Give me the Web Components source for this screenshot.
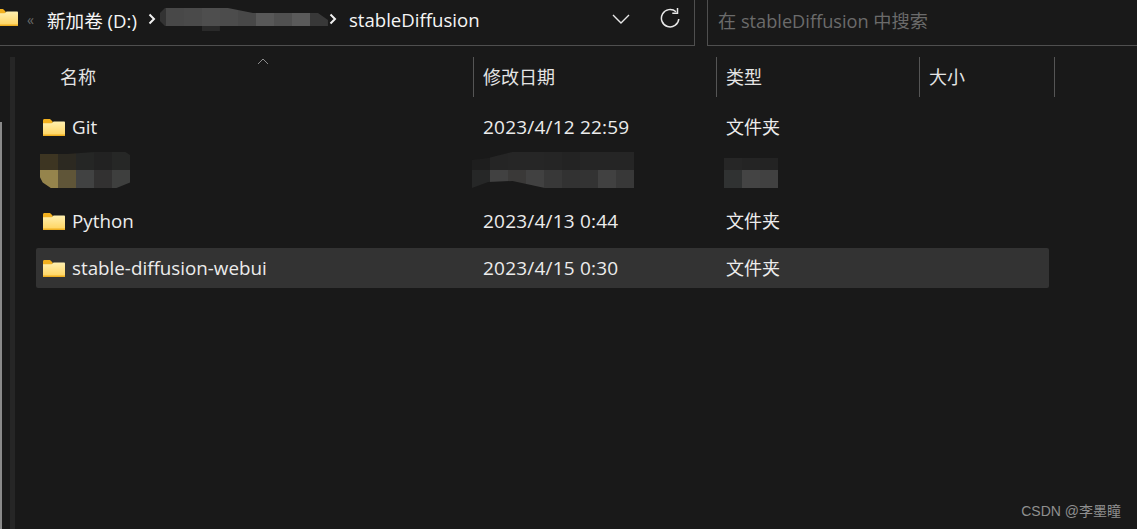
<!DOCTYPE html>
<html lang="zh">
<head>
<meta charset="utf-8">
<title>stableDiffusion</title>
<style>
  html, body { margin: 0; height: 100%; background: #191919; overflow: hidden; }
  body { font-family: "Open Sans", "Noto Sans CJK SC", sans-serif; color: #e6e6e6; }
</style>
</head>
<body>
<explorer-window>
  <address-bar slot="top"></address-bar>
  <file-list slot="main">
    <file-row name="Git" date="2023/4/12 22:59" kind="文件夹"></file-row>
    <file-row blurred></file-row>
    <file-row name="Python" date="2023/4/13 0:44" kind="文件夹"></file-row>
    <file-row name="stable-diffusion-webui" date="2023/4/15 0:30" kind="文件夹" selected></file-row>
  </file-list>
</explorer-window>

<script>
const FOLDER = `<svg width="24" height="20" viewBox="0 0 24 20">
  <defs><linearGradient id="fg" x1="0" y1="0" x2="0" y2="1">
    <stop offset="0" stop-color="#fff0b0"/><stop offset="1" stop-color="#ffd35c"/>
  </linearGradient></defs>
  <path d="M1 3.500C1 2.700 1.600 2 2.400 2H8l2.600 2.600V7H1z" fill="#f2b01e"/>
  <path d="M1 6.200h8.600L11.600 4.400H22c.6 0 1 .5 1 1V18c0 .6-.4 1-1 1H2c-.6 0-1-.4-1-1z" fill="url(#fg)"/>
  <path d="M1 17.600h22V18c0 .6-.4 1-1 1H2c-.6 0-1-.4-1-1z" fill="#efaf22"/>
</svg>`;

// pixelated smear that hides part of the screenshot
class MosaicPatch extends HTMLElement {
  connectedCallback() {
    const rows = this.getAttribute("cells").split("|").map((r) => r.split(","));
    const size = this.getAttribute("size") || 18;
    const root = this.attachShadow({ mode: "open" });
    root.innerHTML = `<style>
      :host { display: inline-grid; grid-auto-rows: ${size}px; grid-template-columns: repeat(${rows[0].length}, ${size}px); }
      i { display: block; }
    </style>` + rows.map((r) => r.map((c) => `<i style="background:#${c}"></i>`).join("")).join("");
    this.style.clipPath = this.getAttribute("clip") || "none";
  }
}
customElements.define("mosaic-patch", MosaicPatch);

const addressTpl = document.createElement("template");
addressTpl.innerHTML = `
<style>
  :host { display: grid; grid-template-columns: 695px 1fr; column-gap: 12px; height: 46px; }
  .crumbs {
    display: flex; align-items: center;
    border-right: 1px solid #4f4f4f; border-bottom: 1px solid #4f4f4f; box-sizing: border-box;
    height: 46px; padding-bottom: 7px; font-size: 18.600px; color: #f5f5f5; overflow: hidden;
  }
  .crumbs svg { flex: none; }
  .home { margin-left: -5px; margin-right: 8px; }
  .more { color: #6a6a6a; font-size: 14px; width: 20px; }
  .sep { margin: 0 -8px 0 11px; }
  .sep2 { margin: 0 12px 0 1px; }
  .drive { white-space: nowrap; }
  mosaic-patch { align-self: flex-start; margin-top: 8px; }
  .path { white-space: nowrap; }
  .tools { margin-left: auto; display: flex; align-items: center; }
  .drop { margin-right: 30px; }
  .refresh { margin-right: 14px; }
  .search {
    border-left: 1px solid #4f4f4f; border-bottom: 1px solid #4f4f4f; box-sizing: border-box; height: 46px;
    padding: 0 0 5px 10px; display: flex; align-items: center;
    font-size: 18.200px; color: #6b6b6b; white-space: nowrap;
  }
</style>
<div class="crumbs">
  <span class="home">${FOLDER}</span>
  <span class="more">«</span>
  <span class="drive">新加卷 (D:)</span>
  <svg class="sep" width="8" height="12" viewBox="0 0 8 12"><path d="M1.500 1.500 6 6l-4.500 4.500" fill="none" stroke="#f0f0f0" stroke-width="2"/></svg>
  <mosaic-patch cells="333333,484848,4a4a4a,4e4e4e,4c4c4c,484848,585858,505050,5a5a5a,383838|191919,191919,191919,2a2a2a,191919,191919,191919,191919,191919,191919" clip="polygon(12px 5px,17px 0,80px 0,105px 5px,170px 5px,180px 12px,180px 18px,72px 18px,72px 23px,54px 23px,54px 18px,17px 18px,12px 13px)"></mosaic-patch>
  <svg class="sep2" width="8" height="12" viewBox="0 0 8 12"><path d="M1.500 1.500 6 6l-4.500 4.500" fill="none" stroke="#f0f0f0" stroke-width="2"/></svg>
  <span class="path">stableDiffusion</span>
  <span class="tools">
    <svg class="drop" width="18" height="10" viewBox="0 0 18 10"><path d="M1 1l8 8 8-8" fill="none" stroke="#e8e8e8" stroke-width="1.400"/></svg>
    <svg class="refresh" width="20" height="22" viewBox="0 0 20 22"><path d="M16 3.800A8.700 8.700 0 1 0 18.800 11" fill="none" stroke="#e8e8e8" stroke-width="1.500"/><path d="M17.500 0v5.200h-5.200" fill="none" stroke="#e8e8e8" stroke-width="1.500"/></svg>
  </span>
</div>
<div class="search">在 stableDiffusion 中搜索</div>`;

class AddressBar extends HTMLElement {
  constructor() {
    super();
    this.attachShadow({ mode: "open" });
    this.shadowRoot.append(addressTpl.content.cloneNode(true));
  }
}
customElements.define("address-bar", AddressBar);

const rowTpl = document.createElement("template");
rowTpl.innerHTML = `
<style>
  :host {
    display: grid; grid-template-columns: 447px 243px 1fr; align-items: center;
    height: 40px; width: 1013px; box-sizing: border-box; font-size: 19px; color: #ececec;
    border-radius: 2px;
  }
  :host([selected]) { background: #333333; }
  .name { display: flex; align-items: center; padding-left: 6px; white-space: nowrap; font-size: 18.800px; }
  .name svg { display: block; margin-right: 6px; }
  .date { display: flex; white-space: nowrap; letter-spacing: .2px; }
  .kind { display: flex; font-size: 18px; margin-top: -2px; }
</style>
<div class="name"></div><div class="date"></div><div class="kind"></div>`;

class FileRow extends HTMLElement {
  constructor() {
    super();
    this.attachShadow({ mode: "open" });
    this.shadowRoot.append(rowTpl.content.cloneNode(true));
  }

  connectedCallback() {
    const [name, date, kind] = this.shadowRoot.querySelectorAll("div");
    if (this.hasAttribute("blurred")) {
      name.style.paddingLeft = "4px";
      name.innerHTML = `<mosaic-patch style="margin-top:-8px" cells="3d3522,2c2921,252625,222222,262726|95844c,5f5538,414242,323131,3e3f3e" clip="polygon(0 2px,30% 2px,60% 0,95% 0,100% 3px,100% 85%,85% 100%,12% 100%,3% 85%,0 70%)"></mosaic-patch>`;
      date.style.marginLeft = "-11px";
      date.innerHTML = `<mosaic-patch style="margin-top:-8px" cells="1e1e1e,252525,262626,262626,252525,232323,252525,252525,252525|262727,414141,3a3938,414141,383838,323232,333333,414141,383838" clip="polygon(0 8px,10% 6px,25% 0,100% 0,100% 100%,45% 100%,25% 29px,10% 30px,0 36px)"></mosaic-patch>`;
      kind.style.marginLeft = "-2px";
      kind.innerHTML = `<mosaic-patch style="margin-top:-6px" cells="262626,242424,232323|303232,444444,414141" clip="polygon(0 6px,100% 6px,100% 100%,0 100%)"></mosaic-patch>`;
      return;
    }
    name.innerHTML = FOLDER;
    name.append(this.getAttribute("name"));
    date.textContent = this.getAttribute("date");
    kind.textContent = this.getAttribute("kind");
  }
}
customElements.define("file-row", FileRow);

const listTpl = document.createElement("template");
listTpl.innerHTML = `
<style>
  :host { display: block; padding: 11px 0 0 36px; }
  header { display: grid; grid-template-columns: 438px 243px 203px 135px; height: 40px; width: 1019px; margin-bottom: 10px; font-size: 18px; color: #e4e4e4; position: relative; }
  header div { display: flex; align-items: center; border-right: 1px solid #555; padding: 0 0 3px 9px; box-sizing: border-box; }
  header div:first-child { padding-left: 24px; }
  .sort { position: absolute; left: 221px; top: 1px; }
  .rows { display: flex; flex-direction: column; gap: 7px; }
</style>
<header>
  <div>名称</div><div>修改日期</div><div>类型</div><div>大小</div>
  <svg class="sort" width="12" height="7" viewBox="0 0 12 7"><path d="M1 6l5-5 5 5" fill="none" stroke="#8c8c8c" stroke-width="1"/></svg>
</header>
<div class="rows"><slot></slot></div>`;

class FileList extends HTMLElement {
  constructor() {
    super();
    this.attachShadow({ mode: "open" });
    this.shadowRoot.append(listTpl.content.cloneNode(true));
  }
}
customElements.define("file-list", FileList);

const windowTpl = document.createElement("template");
windowTpl.innerHTML = `
<style>
  :host { display: flex; flex-direction: column; height: 529px; position: relative; overflow: hidden; }
  .body { flex: 1; display: flex; }
  .edge { width: 2px; margin-top: 76px; background: #8a8a8a; flex: none; }
  .strip { width: 5px; margin: 11px 0 0 8px; background: #262626; flex: none; }
  .main { flex: 1; margin-left: -15px; }
  .mark { position: absolute; right: 16px; bottom: 9px; font: 14px "Liberation Sans", "Noto Sans CJK SC", sans-serif; color: #8f8f8f; }
</style>
<slot name="top"></slot>
<div class="body">
  <div class="edge"></div><div class="strip"></div>
  <div class="main"><slot name="main"></slot></div>
</div>
<div class="mark">CSDN @李墨瞳</div>`;

class ExplorerWindow extends HTMLElement {
  constructor() {
    super();
    this.attachShadow({ mode: "open" });
    this.shadowRoot.append(windowTpl.content.cloneNode(true));
  }
}
customElements.define("explorer-window", ExplorerWindow);
</script>
</body>
</html>
